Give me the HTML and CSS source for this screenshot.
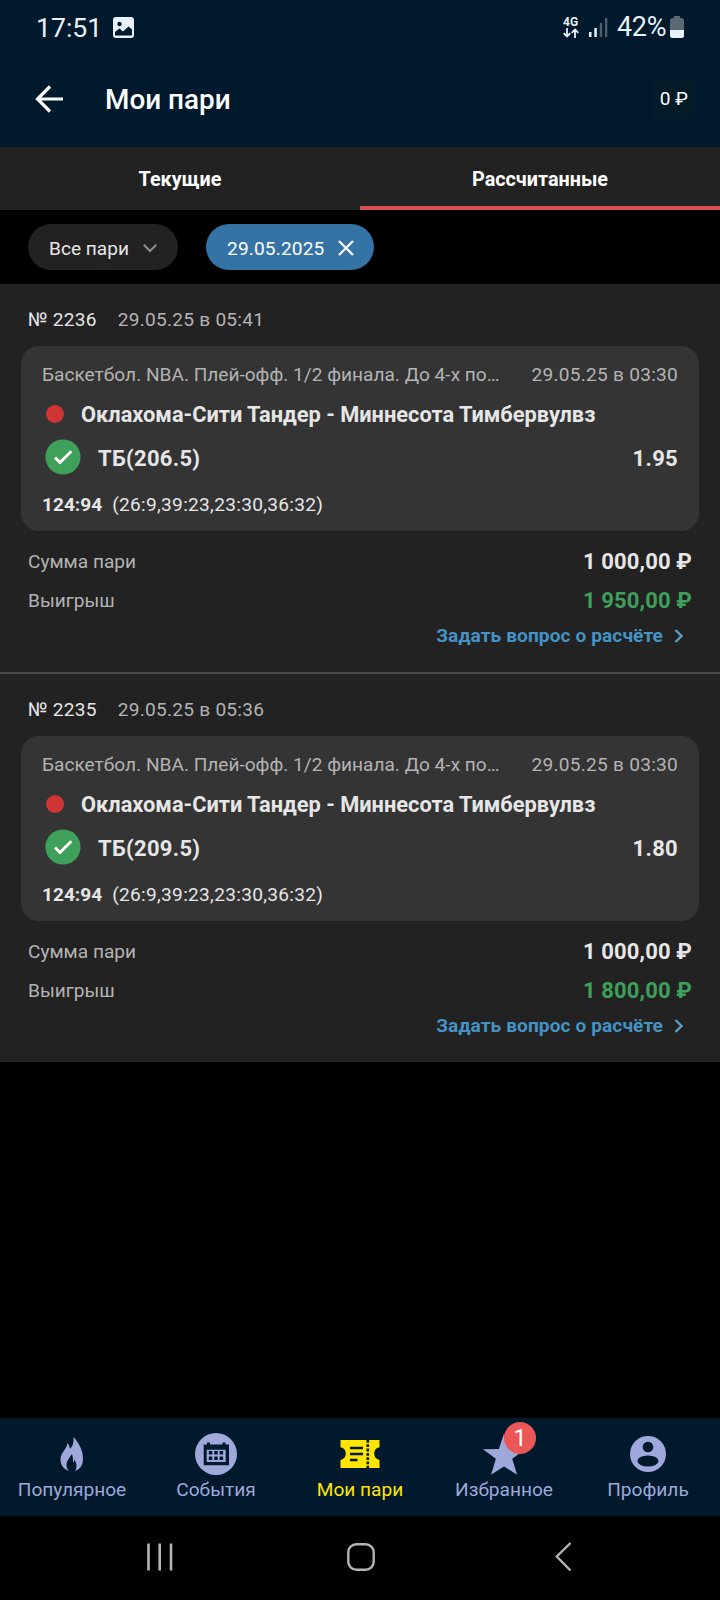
FILE: index.html
```html
<!DOCTYPE html>
<html lang="ru">
<head>
<meta charset="utf-8">
<title>Мои пари</title>
<link rel="stylesheet" href="styles.css">
</head>
<body>
<div class="screen">
  <div class="status">
    <span class="clock">17:51</span>
    <svg class="gallery" width="21" height="21" viewBox="0 0 21 21"><rect width="21" height="21" rx="3" fill="#e9f1fb"/><circle cx="6.500" cy="7" r="2.200" fill="#001a2e"/><path d="M2 18.500v-3.500l4.500-3.500 3.500 3 5.500-5 3.500 3v6z" fill="#001a2e"/></svg>
    <span class="grow"></span>
    <span class="net"><span>4G</span><svg width="16" height="10" viewBox="0 0 16 10" fill="none" stroke="#e9f1fb" stroke-width="1.8"><path d="M4 0v8.500M.7 5.200 4 8.500l3.300-3.300M12 10V1.500M8.700 4.800 12 1.500l3.300 3.300"/></svg></span>
    <svg class="signal" width="19" height="21" viewBox="0 0 19 21"><path d="M0 15h2.500v5H0zM5.300 11h2.500v9H5.300z" fill="#e9f1fb"/><path d="M10.700 6h2.500v14h-2.500zM16 1h2.300v19H16z" fill="#4d5f6e"/></svg>
    <span class="pct">42%</span>
    <svg class="battery" width="14" height="22" viewBox="0 0 14 22"><path d="M4 0h6v2h1.500A2.500 2.500 0 0 1 14 4.500V14H0V4.500A2.500 2.500 0 0 1 2.500 2H4z" fill="#5a6874"/><path d="M0 14h14v5.500a2.500 2.500 0 0 1-2.500 2.500h-9A2.500 2.500 0 0 1 0 19.500z" fill="#e9f1fb"/></svg>
  </div>
  <div class="appbar">
    <svg class="back" width="28" height="28" viewBox="0 0 28 28" fill="none" stroke="#fff" stroke-width="3.200"><path d="M15 1.500 2.500 14 15 26.500M2.500 14H28"/></svg>
    <h1 class="title">Мои пари</h1>
    <span class="balance">0 ₽</span>
  </div>
  <div class="tabs">
    <div class="tab">Текущие</div>
    <div class="tab active">Рассчитанные</div>
  </div>
  <div class="filters">
    <div class="chip">Все пари<svg width="14" height="9" viewBox="0 0 14 9" fill="none" stroke="#8e8e8e" stroke-width="2"><path d="M.8.8 7 7l6.200-6.200"/></svg></div>
    <div class="chip date">29.05.2025<svg width="16" height="16" viewBox="0 0 16 16" fill="none" stroke="#fff" stroke-width="2.200"><path d="m1 1 14 14M15 1 1 15"/></svg></div>
  </div>
  <div class="bet">
    <div class="head"><span class="num">№ 2236</span><span>29.05.25 в 05:41</span></div>
    <div class="card">
      <div class="league"><span class="name">Баскетбол. NBA. Плей-офф. 1/2 финала. До 4-х по…</span><span class="when">29.05.25 в 03:30</span></div>
      <div class="match"><i class="dot"></i><span>Оклахома-Сити Тандер - Миннесота Тимбервулвз</span></div>
      <div class="pick"><svg width="36" height="36" viewBox="0 0 36 36"><circle cx="18" cy="18" r="17.600" fill="#3ea05a"/><path d="m10 18.500 5 5L26.300 12.300" fill="none" stroke="#fff" stroke-width="2.900"/></svg><span class="outcome">ТБ(206.5)</span><span class="odds">1.95</span></div>
      <div class="score"><b>124:94</b><span class="periods">(26:9,39:23,23:30,36:32)</span></div>
    </div>
    <div class="row"><span>Сумма пари</span><span class="sum">1 000,00 ₽</span></div>
    <div class="row second"><span>Выигрыш</span><span class="sum win">1 950,00 ₽</span></div>
    <div class="ask"><span>Задать вопрос о расчёте</span><svg width="10" height="14" viewBox="0 0 10 14" fill="none" stroke="#5a9fc8" stroke-width="2.400"><path d="m1.500 1 6 6-6 6"/></svg></div>
  </div>
  <div class="bet last">
    <div class="head"><span class="num">№ 2235</span><span>29.05.25 в 05:36</span></div>
    <div class="card">
      <div class="league"><span class="name">Баскетбол. NBA. Плей-офф. 1/2 финала. До 4-х по…</span><span class="when">29.05.25 в 03:30</span></div>
      <div class="match"><i class="dot"></i><span>Оклахома-Сити Тандер - Миннесота Тимбервулвз</span></div>
      <div class="pick"><svg width="36" height="36" viewBox="0 0 36 36"><circle cx="18" cy="18" r="17.600" fill="#3ea05a"/><path d="m10 18.500 5 5L26.300 12.300" fill="none" stroke="#fff" stroke-width="2.900"/></svg><span class="outcome">ТБ(209.5)</span><span class="odds">1.80</span></div>
      <div class="score"><b>124:94</b><span class="periods">(26:9,39:23,23:30,36:32)</span></div>
    </div>
    <div class="row"><span>Сумма пари</span><span class="sum">1 000,00 ₽</span></div>
    <div class="row second"><span>Выигрыш</span><span class="sum win">1 800,00 ₽</span></div>
    <div class="ask"><span>Задать вопрос о расчёте</span><svg width="10" height="14" viewBox="0 0 10 14" fill="none" stroke="#5a9fc8" stroke-width="2.400"><path d="m1.500 1 6 6-6 6"/></svg></div>
  </div>
  <div class="grow"></div>
  <nav class="nav">
    <div class="item"><svg width="44" height="44" viewBox="0 0 44 44"><path d="M23.500 5C29 11 33 18 33 27c0 6-3 10.500-8 12 3-5 1-8-.5-11.500-.3 2-.8 2.500-1.500 3 .2-3.500-.3-6.500-1-8.500-3 4.500-5.500 7-5.500 11 0 2.500 1 4.500 2.500 6-5-1.500-8.500-6-8.500-11.500 0-7 6-9.500 7-16.500 1.500 2 2.300 4 2.500 6 3-3 4-7 3.500-12z" fill="#9fa8da"/></svg><span>Популярное</span></div>
    <div class="item"><svg width="44" height="44" viewBox="0 0 44 44" fill="#00192c"><circle cx="22" cy="22" r="21" fill="#9fa8da"/><path fill-rule="evenodd" d="M9.700 12.500H13V10.500h3v2h12.500v-2h3v2h3.500v20.800H9.700zM12.700 17.700V30h19V17.700z"/><path d="M14.800 19h3.500v3.500h-3.500zM20.200 19h3.500v3.500h-3.500zM25.600 19h3.500v3.500h-3.500zM14.800 24.400h3.500v3.500h-3.500zM20.200 24.400h3.500v3.500h-3.500zM25.600 24.400h3.500v3.500h-3.500z"/></svg><span>События</span></div>
    <div class="item current"><svg width="44" height="44" viewBox="0 0 44 44"><path d="M2.500 8h39v7.300a6.400 6.400 0 0 0 0 12.600V36h-39v-8.100a6.400 6.400 0 0 0 0-12.600z" fill="#ffe500"/><path d="M12 16h13M12 22h13M12 28h7.500" stroke="#00192c" stroke-width="2.500"/><path d="M29.800 8v28" stroke="#00192c" stroke-width="2.600" stroke-dasharray="2.800 1.500"/></svg><span>Мои пари</span></div>
    <div class="item"><svg width="44" height="44" viewBox="0 0 44 44"><path d="m22 1.500 5.200 15.600 16 .1-13 9.500 4.900 16L22 34.500l-13 8.200 4.900-16-13-9.500 16-.1z" fill="#9fa8da"/></svg><span class="badge">1</span><span>Избранное</span></div>
    <div class="item"><svg width="44" height="44" viewBox="0 0 44 44" fill="#00192c"><circle cx="22" cy="22" r="18" fill="#9fa8da"/><circle cx="22" cy="15" r="5.300"/><ellipse cx="22" cy="29" rx="10.500" ry="5.500"/></svg><span>Профиль</span></div>
  </nav>
  <div class="system">
    <svg class="recent" width="26" height="28" viewBox="0 0 26 28" fill="none" stroke="#b5b5b5" stroke-width="2.600"><path d="M1.500.5v27M12.700.5v27M24 .5v27"/></svg>
    <svg class="home" width="28" height="28" viewBox="0 0 28 28" fill="none" stroke="#b5b5b5" stroke-width="2.400"><rect x="1.300" y="1.300" width="25.400" height="25.400" rx="8"/></svg>
    <svg class="sysback" width="17" height="30" viewBox="0 0 17 30" fill="none" stroke="#b5b5b5" stroke-width="2.400"><path d="M15.500 1 1.800 14.500 15.500 28.500"/></svg>
  </div>
</div>
</body>
</html>
```
FILE: styles.css
```css
* { box-sizing: border-box; }
body { margin: 0; background: #000; font-family: Roboto, sans-serif; }
svg { display: block; flex: none; }
span { white-space: nowrap; }
.screen { width: 720px; height: 1600px; display: flex; flex-direction: column; color: #e6e6e6; font-size: 19.1px; }
.grow { flex: 1; }
.status { height: 54px; background: #00192c; display: flex; align-items: center; padding: 0 36px; color: #e9f1fb; }
.clock { font-size: 26.600px; width: 77px; }
.net { font-size: 12px; font-weight: 700; line-height: 11px; width: 26px; }
.signal { margin-right: 9px; }
.pct { font-size: 27px; letter-spacing: -.3px; width: 53px; }
.appbar { height: 93px; background: #00192c; display: flex; align-items: center; padding: 0 26px 4px 35px; }
.title { margin: 2px auto 0 42px; font-size: 27.900px; font-weight: 500; color: #fff; }
.balance { background: #041b28; padding: 9px 6px; line-height: 22px; color: #fff; }
.tabs { height: 63px; display: flex; background: #222; }
.tab { flex: 1; text-align: center; line-height: 65px; font-weight: 700; font-size: 19.800px; color: #fff; }
.active { border-bottom: 4px solid #d94f57; }
.filters { height: 74px; padding: 14px 28px; display: flex; gap: 28px; }
.chip { height: 46px; width: 150px; border-radius: 23px; background: #222; padding: 2px 21px 0; display: flex; align-items: center; justify-content: space-between; }
.date { width: 168px; background: #3473a4; color: #fff; padding-right: 20px; letter-spacing: .15px; }
.bet { height: 390px; background: #222; border-bottom: 2px solid #4b4b4b; padding: 24px 21px 0; color: #b3b3b3; }
.last { height: 388px; border: 0; }
.head { display: flex; gap: 21px; padding-left: 7px; height: 38px; line-height: 24px; letter-spacing: .25px; }
.num { color: #e6e6e6; }
.card { height: 185px; border-radius: 18px; background: #343434; padding: 17px 21px 0; }
.league { display: flex; justify-content: space-between; height: 23px; line-height: 24px; }
.when { letter-spacing: .25px; }
.match { display: flex; align-items: center; gap: 17px; height: 26px; margin-top: 15px; padding-left: 4px; color: #e6e6e6; font-weight: 700; font-size: 21.800px; }
.dot { width: 18px; height: 18px; border-radius: 50%; background: #d03535; }
.pick { display: flex; align-items: center; height: 36px; margin-top: 12px; padding-left: 3px; color: #e6e6e6; font-weight: 700; font-size: 22px; letter-spacing: .3px; }
.outcome { margin: 3px auto 0 17px; }
.odds { margin-top: 3px; }
.score { display: flex; gap: 10px; margin-top: 17px; line-height: 25px; color: #e6e6e6; }
.periods { letter-spacing: .3px; }
.row { display: flex; justify-content: space-between; padding: 0 7px; margin-top: 19px; height: 24px; line-height: 24px; }
.second { margin-top: 15px; }
.sum { font-size: 22px; font-weight: 700; color: #e6e6e6; letter-spacing: .15px; }
.win { color: #3ea05a; }
.ask { display: flex; justify-content: flex-end; align-items: center; gap: 11px; margin-top: 11px; padding-right: 15px; line-height: 24px; font-weight: 700; letter-spacing: .1px; color: #4593c4; }
.nav { height: 98px; background: #00192c; display: flex; }
.item { width: 144px; position: relative; display: flex; flex-direction: column; align-items: center; padding-top: 14px; line-height: 27px; color: #9fa8da; }
.current { color: #ffe500; }
.badge { position: absolute; left: 72px; top: 4px; width: 32px; height: 32px; border-radius: 50%; background: #eb5757; color: #fff; font-size: 24px; line-height: 32px; text-align: center; }
.system { height: 84px; display: flex; align-items: center; padding: 0 0 2px 147px; }
.home { margin-left: 174px; }
.sysback { margin-left: 180px; }
```
